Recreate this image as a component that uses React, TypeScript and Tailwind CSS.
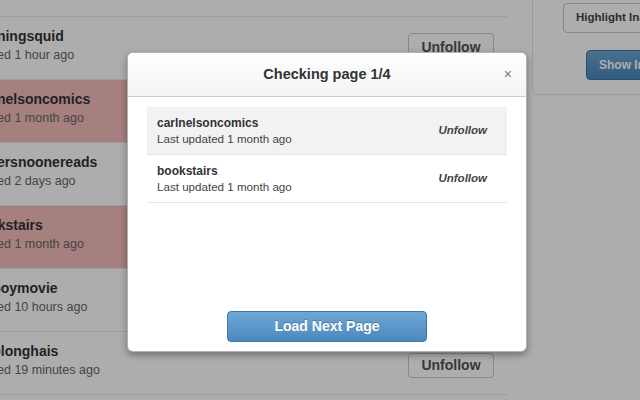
import React from "react";

type Row = { name: string; sub: string; red?: boolean; tall?: boolean };

const rows: Row[] = [
  { name: "learningsquid", sub: "Posted 1 hour ago", tall: true },
  { name: "carlnelsoncomics", sub: "Posted 1 month ago", red: true },
  { name: "papersnoonereads", sub: "Posted 2 days ago" },
  { name: "bookstairs", sub: "Posted 1 month ago", red: true },
  { name: "myboymovie", sub: "Posted 10 hours ago" },
  { name: "maolonghais", sub: "Posted 19 minutes ago" },
];

const checked = [
  { name: "carlnelsoncomics", sub: "Last updated 1 month ago", shaded: true },
  { name: "bookstairs", sub: "Last updated 1 month ago", shaded: false },
];

export default function App() {
  return (
    <div className="relative w-[640px] h-[400px] overflow-hidden bg-white font-['Liberation_Sans',Arial,sans-serif]">
      {/* underlying page */}
      <div className="flex items-start">
        <div className="ml-[-28px] w-[535px] shrink-0">
          <div className="h-[17px] border-b border-[#e8e8e8]" />
          {rows.map((r) => (
            <div
              key={r.name}
              className={`flex justify-between h-[63px] border-b border-[#e8e8e8] pr-[13px] ${
                r.red ? "bg-[#f5bcbc]" : ""
              }`}
            >
              <div className="pt-[10px] whitespace-nowrap">
                <div className="text-[14px] leading-[19px] font-bold text-[#333]">{r.name}</div>
                <div className="text-[12.5px] leading-[18px] text-[#666]">{r.sub}</div>
              </div>
              <div
                className={`${
                  r.tall ? "mt-[16px] h-[29px]" : "mt-[21px] h-[25px]"
                } w-[86px] flex items-center justify-center border border-[#c8c8c8] rounded-[4px] bg-white text-[14px] font-bold text-[#555]`}
              >
                Unfollow
              </div>
            </div>
          ))}
        </div>
        <div className="ml-[25px] mt-[-10px] w-[160px] h-[105px] shrink-0 border border-[#e3e3e3] rounded-[6px] bg-white pt-[12px] pl-[30px]">
          <div className="h-[30px] w-[140px] flex items-center px-[12px] border border-[#c8c8c8] rounded-[4px] text-[11.5px] font-bold text-[#444] whitespace-nowrap">
            Highlight Inactive
          </div>
          <div className="mt-[17px] ml-[23px] h-[30px] w-[120px] flex items-center px-[12px] border border-[#3f78a8] rounded-[4px] bg-linear-to-b from-[#6aa7d4] to-[#4a86bb] text-[12px] font-bold text-white whitespace-nowrap">
            Show Inactive
          </div>
        </div>
      </div>

      {/* overlay */}
      <div className="absolute inset-0 bg-black/[0.32]" />

      {/* modal */}
      <div className="absolute left-[127px] top-[52px] w-[400px] h-[300px] flex flex-col bg-white rounded-[6px] border border-[rgba(0,0,0,0.3)] shadow-[0_3px_7px_rgba(0,0,0,0.35)] overflow-hidden">
        <div className="relative h-[44px] shrink-0 flex items-center justify-center border-b border-[#cccccc] bg-linear-to-b from-white to-[#f3f3f3]">
          <span className="text-[14.5px] font-bold text-[#333]">Checking page 1/4</span>
          <span className="absolute right-[14px] top-[12px] text-[14px] leading-[18px] text-[#777]">×</span>
        </div>
        <div className="flex-1 flex flex-col px-[19px] pt-[10px] pb-[9px]">
          <div>
            {checked.map((c) => (
              <div
                key={c.name}
                className={`flex items-center justify-between h-[48px] border-b border-[#e6e6e6] pl-[10px] pr-[20px] ${
                  c.shaded ? "bg-[#f2f2f2]" : ""
                }`}
              >
                <div className="whitespace-nowrap">
                  <div className="text-[12px] leading-[16px] font-bold text-[#333]">{c.name}</div>
                  <div className="text-[11.6px] leading-[16px] text-[#444]">{c.sub}</div>
                </div>
                <div className="text-[11.5px] italic font-bold text-[#444]">Unfollow</div>
              </div>
            ))}
          </div>
          <div className="flex-1" />
          <div className="flex justify-center">
            <div className="w-[200px] h-[31px] flex items-center justify-center rounded-[4px] border border-[#3f78a8] bg-linear-to-b from-[#6ba8d5] to-[#4c88bd] text-[14px] font-bold text-white [text-shadow:0_-1px_0_rgba(0,0,0,0.25)]">
              Load Next Page
            </div>
          </div>
        </div>
      </div>
    </div>
  );
}
